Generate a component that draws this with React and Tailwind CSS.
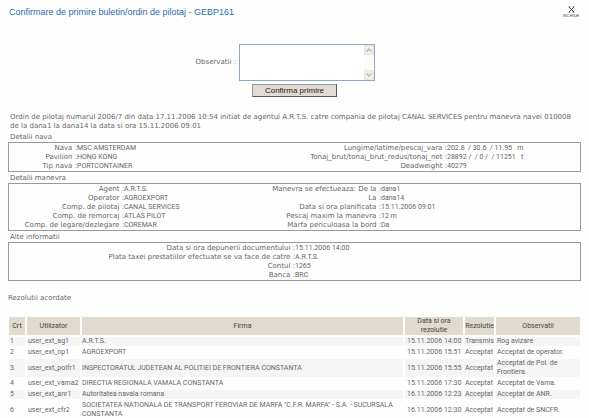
import React from "react";

const verdana = "font-['DejaVu_Sans',Verdana,sans-serif]";
const arial = "font-['Liberation_Sans',Arial,sans-serif]";
const narrow = "font-[Roboto,Arial,sans-serif]";

const ship = [
  ["Nava", "MSC AMSTERDAM"],
  ["Pavilion", "HONG KONG"],
  ["Tip nava", "PORTCONTAINER"],
];
const shipSize = [
  ["Lungime/latime/pescaj_vara", "202.8  / 30.6  / 11.95   m"],
  ["Tonaj_brut/tonaj_brut_redus/tonaj_net", "28892 /  / 0 /  / 11251   t"],
  ["Deadweight", "40279"],
];
const companies = [
  ["Agent", "A.R.T.S."],
  ["Operator", "AGROEXPORT"],
  ["Comp. de pilotaj", "CANAL SERVICES"],
  ["Comp. de remorcaj", "ATLAS PILOT"],
  ["Comp. de legare/dezlegare", "COREMAR"],
];
const manoeuvre = [
  ["Manevra se efectueaza: De la", "dana1"],
  ["La", "dana14"],
  ["Data si ora planificata", "15.11.2006 09:01"],
  ["Pescaj maxim la manevra", "12 m"],
  ["Marfa periculoasa la bord", "Da"],
];
const other = [
  ["Data si ora depunerii documentului", "15.11.2006 14:00"],
  ["Plata taxei prestatiilor efectuate se va face de catre", "A.R.T.S."],
  ["Contul", "1265"],
  ["Banca", "BRC"],
];

const resolutions = [
  ["user_ext_ag1", "A.R.T.S.", "15.11.2006 14:00", "Transmis", "Rog avizare"],
  ["user_ext_op1", "AGROEXPORT", "15.11.2006 15:51", "Acceptat", "Acceptat de operator."],
  ["user_ext_polfr1", "INSPECTORATUL JUDETEAN AL POLITIEI DE FRONTIERA CONSTANTA", "15.11.2006 15:55", "Acceptat", "Acceptat de Pol. de Frontiera."],
  ["user_ext_vama2", "DIRECTIA REGIONALA VAMALA CONSTANTA", "15.11.2006 17:30", "Acceptat", "Acceptat de Vama."],
  ["user_ext_anr1", "Autoritatea navala romana", "16.11.2006 12:23", "Acceptat", "Acceptat de ANR."],
  ["user_ext_cfr2", "SOCIETATEA NATIONALA DE TRANSPORT FEROVIAR DE MARFA \"C.F.R. MARFA\" - S.A. - SUCURSALA CONSTANTA", "16.11.2006 12:30", "Acceptat", "Acceptat de SNCFR."],
];

function Fields({ rows, className }) {
  return (
    <dl className={className}>
      {rows.map(([label, value]) => (
        <div key={label} className="flex h-[9px] leading-[9px] whitespace-pre">
          <dt className="flex-1 text-right">{label} :</dt>
          <dd className={`${narrow} w-[100px] text-[7px]`}>{value}</dd>
        </div>
      ))}
    </dl>
  );
}

function Section({ title, children }) {
  return (
    <section className="mt-px">
      <h2 className="h-[10px] pl-[2px] leading-[10px]">{title}</h2>
      <div className="flex border border-[#9a9a9a] pt-px">{children}</div>
    </section>
  );
}

export default function App() {
  return (
    <main className={`${verdana} bg-[#fefefe] pt-[6px] pr-2 pl-2 text-[7px] text-[#666]`}>
      <header className="flex h-[12px] items-start justify-between">
        <h1 className={`${arial} pl-px text-[9px] leading-[12px] text-[#2b6cab]`}>
          Confirmare de primire buletin/ordin de pilotaj - GEBP161
        </h1>
        <button type="button" className={`${arial} flex w-5 flex-col items-center text-[4px] leading-[5px] text-[#444]`}>
          <svg width="7" height="7" viewBox="0 0 7 7" fill="none" stroke="#333">
            <path d="M1.2 1 5.8 6M5.8 1 1.2 6" strokeWidth="1" />
            <path d="M.6 .7h1.6M4.8 .7h1.6M.6 6.3h1.6M4.8 6.3h1.6" strokeWidth=".6" />
          </svg>
          INCHIDE
        </button>
      </header>

      <form className="mt-[26px] grid grid-cols-[231px_136px] gap-y-[3px]" onSubmit={(e) => e.preventDefault()}>
        <label htmlFor="observatii" className="self-center pr-[3px] text-right">Observatii :</label>
        <div className="relative h-[37px]">
          <textarea
            id="observatii"
            className="block h-full w-full resize-none overflow-hidden border border-[#8ea9c0] bg-white p-px text-[7px] outline-none"
          />
          <svg className="pointer-events-none absolute top-px right-px" width="10" height="35" viewBox="0 0 10 35" fill="none">
            <path d="M0 0h10v35H0z" fill="#fbfbf8" />
            <path d="M.5 .5h9v9h-9zM.5 25.5h9v9h-9z" fill="#f0efe9" stroke="#e6e5de" />
            <path d="M2.5 6.5 5 4l2.5 2.5M2.5 28.5 5 31l2.5-2.5" stroke="#b9b8b0" strokeWidth="1.3" />
          </svg>
        </div>
        <button
          type="submit"
          className={`${arial} col-start-2 ml-[13px] h-[13px] w-[85px] border border-t-[#999] border-r-[#555] border-b-[#555] border-l-[#999] bg-[#e3dad3] text-[8px] leading-[11px] text-[#222]`}
        >
          Confirma primire
        </button>
      </form>

      <p className="mt-[16px] pr-[2px] pl-[2px] leading-[9px]">
        Ordin de pilotaj numarul 2006/7 din data 17.11.2006 10:54 initiat de agentul A.R.T.S. catre compania de pilotaj
        CANAL SERVICES pentru manevra navei 010008 de la dana1 la dana14 la data si ora 15.11.2006 09:01
      </p>

      <Section title="Detalii nava">
        <Fields rows={ship} className="w-[168px]" />
        <Fields rows={shipSize} className="w-[370px]" />
      </Section>
      <Section title="Detalii manevra">
        <Fields rows={companies} className="w-[215px]" />
        <Fields rows={manoeuvre} className="w-[257px]" />
      </Section>
      <Section title="Alte informatii">
        <Fields rows={other} className="w-[386px]" />
      </Section>

      <h2 className="mt-[13px] leading-[9px]">Rezolutii acordate</h2>
      <div className="-mx-px">
        <table className={`${narrow} mt-[12px] w-full table-fixed border-separate border-spacing-[2px] text-[7px] leading-[9px]`}>
          <colgroup>
            <col className="w-[16px]" />
            <col className="w-[53px]" />
            <col />
            <col className="w-[58px]" />
            <col className="w-[29px]" />
            <col className="w-[84px]" />
          </colgroup>
          <thead>
            <tr className="h-[18px] text-[#444] [&>th]:bg-[#e1dacf] [&>th]:font-normal">
              <th>Crt</th>
              <th>Utilizator</th>
              <th>Firma</th>
              <th className="px-2">Data si ora rezolutie</th>
              <th>Rezolutie</th>
              <th>Observatii</th>
            </tr>
          </thead>
          <tbody>
            {resolutions.map(([user, firm, date, status, note], i) => (
              <tr key={user} className="odd:[&>td]:bg-[#f5f5f5] [&>td]:whitespace-nowrap">
                <td className="pl-px">{i + 1}</td>
                <td className="pl-px">{user}</td>
                <td className="whitespace-normal!">{firm}</td>
                <td className="pl-[2px]">{date}</td>
                <td>{status}</td>
                <td className="whitespace-normal! pr-4 pl-px">{note}</td>
              </tr>
            ))}
          </tbody>
        </table>
      </div>
    </main>
  );
}
